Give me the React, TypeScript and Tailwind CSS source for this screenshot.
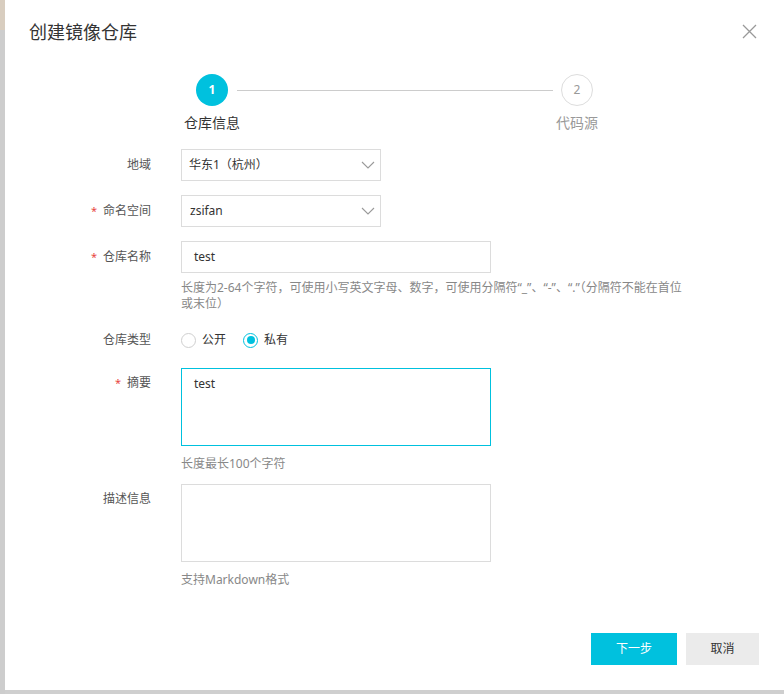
import React from "react";

const FONT = { fontFamily: '"Noto Sans", "Noto Sans CJK SC", sans-serif' };

function Chevron() {
  return (
    <svg width="14" height="8" viewBox="0 0 14 8" fill="none">
      <path d="M1 1 L7 7 L13 1" stroke="#9a9a9a" strokeWidth="1.1" />
    </svg>
  );
}

function Label({ text, required, className = "" }: { text: string; required?: boolean; className?: string }) {
  return (
    <div className={"w-[146px] shrink-0 text-right text-[12px] text-[#555] " + className}>
      {required && <span className="text-[#e8473f] mr-[6px] text-[11px]">*</span>}
      {text}
    </div>
  );
}

export default function App() {
  return (
    <div className="w-[784px] h-[694px] bg-[#cfcfcf] flex overflow-hidden" style={FONT}>
      <div className="w-[5px] shrink-0 flex flex-col">
        <div className="h-[30px] bg-[#d8cdbf]" />
        <div className="flex-1 bg-[#cdcdcd]" />
      </div>
      <div className="flex-1 h-[690px] bg-white flex flex-col">
        {/* header */}
        <div className="flex justify-between items-start pt-[20px] pl-[24px] pr-[27px]">
          <div className="text-[18px] leading-[24px] text-[#333]">创建镜像仓库</div>
          <svg width="15" height="15" viewBox="0 0 15 15" className="mt-[4px]">
            <path d="M1 1 L14 14 M14 1 L1 14" stroke="#999" strokeWidth="1.3" />
          </svg>
        </div>

        {/* steps */}
        <div className="flex items-start ml-[191px] mt-[30px]">
          <div className="w-[32px] flex flex-col items-center">
            <div className="w-[32px] h-[32px] rounded-full bg-[#00c1de] text-white text-[12px] font-bold flex items-center justify-center">1</div>
            <div className="mt-[7px] whitespace-nowrap text-[14px] leading-[20px] text-[#333]">仓库信息</div>
          </div>
          <div className="w-[316px] h-px bg-[#cccccc] mt-[16px] ml-[9px] mr-[8px]" />
          <div className="w-[32px] flex flex-col items-center">
            <div className="w-[32px] h-[32px] rounded-full border border-[#dddddd] text-[#999] text-[12px] flex items-center justify-center">2</div>
            <div className="mt-[7px] whitespace-nowrap text-[14px] leading-[20px] text-[#999]">代码源</div>
          </div>
        </div>

        {/* form */}
        <div className="flex flex-col mt-[16px]">
          <div className="flex items-start">
            <Label text="地域" className="leading-[32px]" />
            <div className="ml-[30px] w-[200px] h-[32px] border border-[#dcdcdc] flex items-center justify-between pl-[7px] pr-[5px] text-[12px] text-[#333]">
              <span>华东1（杭州）</span>
              <Chevron />
            </div>
          </div>

          <div className="flex items-start mt-[14px]">
            <Label text="命名空间" required className="leading-[32px]" />
            <div className="ml-[30px] w-[200px] h-[32px] border border-[#dcdcdc] flex items-center justify-between pl-[8px] pr-[5px] text-[12px] text-[#333]">
              <span>zsifan</span>
              <Chevron />
            </div>
          </div>

          <div className="flex items-start mt-[14px]">
            <Label text="仓库名称" required className="leading-[32px]" />
            <div className="ml-[30px] flex flex-col">
              <div className="w-[310px] h-[32px] border border-[#dcdcdc] flex items-center pl-[12px] text-[12px] text-[#333]">test</div>
              <div className="mt-[7px] w-[508px] text-[12px] leading-[16px] text-[#888]">
                长度为2-64个字符，可使用小写英文字母、数字，可使用分隔符“_”、“-”、“.”（分隔符不能在首位或末位）
              </div>
            </div>
          </div>

          <div className="flex items-start mt-[18px]">
            <Label text="仓库类型" className="leading-[20px]" />
            <div className="ml-[30px] flex items-center h-[20px] text-[12px] text-[#333]">
              <span className="w-[15px] h-[15px] rounded-full border border-[#cfcfcf] bg-white" />
              <span className="ml-[6px]">公开</span>
              <span className="ml-[17px] w-[15px] h-[15px] rounded-full border border-[#00c1de] flex items-center justify-center">
                <span className="w-[8px] h-[8px] rounded-full bg-[#00c1de]" />
              </span>
              <span className="ml-[6px]">私有</span>
            </div>
          </div>

          <div className="flex items-start mt-[18px]">
            <Label text="摘要" required className="leading-[20px] pt-[5px]" />
            <div className="ml-[30px] flex flex-col">
              <div className="w-[310px] h-[78px] border border-[#00c1de] pl-[12px] pt-[6px] text-[12px] leading-[18px] text-[#333]">test</div>
              <div className="mt-[10px] text-[12px] leading-[16px] text-[#888]">长度最长100个字符</div>
            </div>
          </div>

          <div className="flex items-start mt-[12px]">
            <Label text="描述信息" className="leading-[20px] pt-[5px]" />
            <div className="ml-[30px] flex flex-col">
              <div className="w-[310px] h-[78px] border border-[#dcdcdc]" />
              <div className="mt-[10px] text-[12px] leading-[16px] text-[#888]">支持Markdown格式</div>
            </div>
          </div>

          <div className="flex justify-end mt-[45px] pr-[25px]">
            <div className="w-[86px] h-[32px] bg-[#00c1de] text-white text-[12px] flex items-center justify-center">下一步</div>
            <div className="ml-[9px] w-[73px] h-[32px] bg-[#ebebeb] text-[#333] text-[12px] flex items-center justify-center">取消</div>
          </div>
        </div>
      </div>
    </div>
  );
}
